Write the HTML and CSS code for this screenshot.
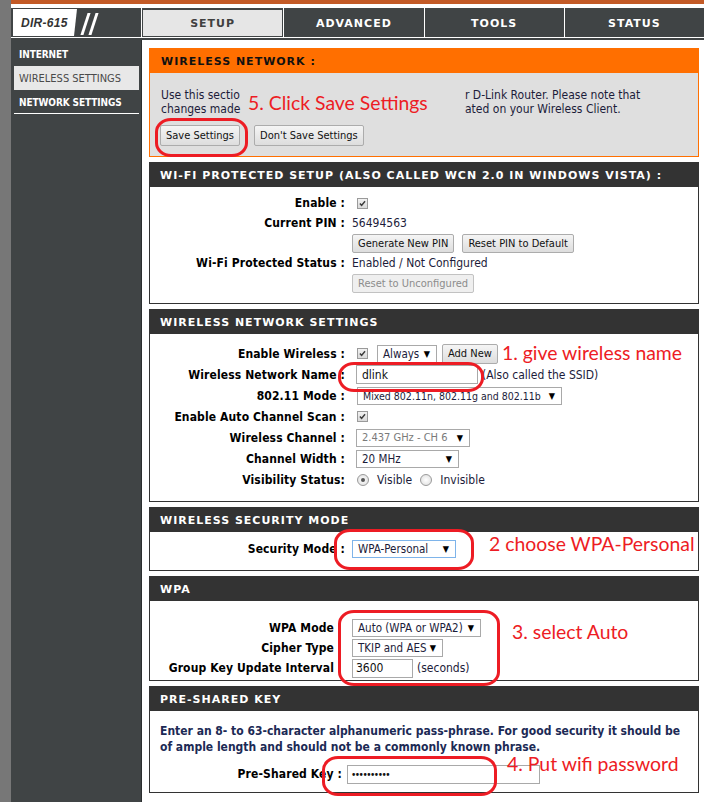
FILE: index.html
```html
<!DOCTYPE html>
<html lang="en">
<head>
    <meta charset="UTF-8">
    <title>DIR-615 - Wireless Settings</title>
    <link rel="stylesheet" href="styles.css">
</head>
<body>
<div class="page">
    <div class="brand-bar"></div>
    <div class="topnav">
        <div class="logo">
            <span class="model">DIR-615</span>
            <span class="slashes"><i></i><i></i></span>
        </div>
        <ul class="tabs">
            <li class="active"><span>SETUP</span></li>
            <li>ADVANCED</li>
            <li>TOOLS</li>
            <li>STATUS</li>
        </ul>
    </div>

    <div class="main">
        <ul class="sidenav">
            <li>INTERNET</li>
            <li class="current">WIRELESS SETTINGS</li>
            <li>NETWORK SETTINGS</li>
        </ul>

        <div class="content">
            <!-- page intro + save buttons -->
            <div class="box box-orange">
                <h2>WIRELESS NETWORK :</h2>
                <div class="box-body intro">
                    <div class="intro-text">
                        <p class="intro-left">Use this sectio<br>changes made</p>
                        <span class="note note-save">5. Click Save Settings</span>
                        <p>r D-Link Router. Please note that<br>ated on your Wireless Client.</p>
                    </div>
                    <div class="actions">
                        <button class="btn">Save Settings</button>
                        <button class="btn">Don't Save Settings</button>
                    </div>
                </div>
            </div>

            <div class="box">
                <h2>WI-FI PROTECTED SETUP (ALSO CALLED WCN 2.0 IN WINDOWS VISTA) :</h2>
                <div class="box-body form form-wps">
                    <span class="lbl">Enable :</span>
                    <span class="val"><span class="check"><svg viewBox="0 0 11 11"><path d="M2.3 5.6 4.4 7.8 8.6 2.8"/></svg></span></span>
                    <span class="lbl">Current PIN :</span>
                    <span class="val">56494563</span>
                    <span></span>
                    <span class="val btn-row">
                        <button class="btn">Generate New PIN</button>
                        <button class="btn">Reset PIN to Default</button>
                    </span>
                    <span class="lbl">Wi-Fi Protected Status :</span>
                    <span class="val">Enabled / Not Configured</span>
                    <span></span>
                    <span class="val"><button class="btn" disabled>Reset to Unconfigured</button></span>
                </div>
            </div>

            <div class="box">
                <h2>WIRELESS NETWORK SETTINGS</h2>
                <div class="box-body form form-wns">
                    <span class="lbl">Enable Wireless :</span>
                    <span class="val">
                        <span class="check"><svg viewBox="0 0 11 11"><path d="M2.3 5.6 4.4 7.8 8.6 2.8"/></svg></span>
                        <span class="select w-always">Always<b>&#9660;</b></span>
                        <button class="btn btn-add">Add New</button>
                    </span>
                    <span class="lbl">Wireless Network Name :</span>
                    <span class="val">
                        <input class="field w-ssid" type="text" value="dlink">
                        <span class="hint">(Also called the SSID)</span>
                    </span>
                    <span class="lbl">802.11 Mode :</span>
                    <span class="val"><span class="select w-mode">Mixed 802.11n, 802.11g and 802.11b<b>&#9660;</b></span></span>
                    <span class="lbl">Enable Auto Channel Scan :</span>
                    <span class="val"><span class="check"><svg viewBox="0 0 11 11"><path d="M2.3 5.6 4.4 7.8 8.6 2.8"/></svg></span></span>
                    <span class="lbl">Wireless Channel :</span>
                    <span class="val"><span class="select w-channel is-off">2.437 GHz - CH 6<b>&#9660;</b></span></span>
                    <span class="lbl">Channel Width :</span>
                    <span class="val"><span class="select w-width">20 MHz<b>&#9660;</b></span></span>
                    <span class="lbl">Visibility Status:</span>
                    <span class="val radios">
                        <span class="radio on"></span>Visible
                        <span class="radio"></span>Invisible
                    </span>
                </div>
            </div>

            <div class="box">
                <h2>WIRELESS SECURITY MODE</h2>
                <div class="box-body form form-wsm">
                    <span class="lbl">Security Mode :</span>
                    <span class="val"><span class="select w-security is-focus">WPA-Personal<b>&#9660;</b></span></span>
                </div>
            </div>

            <div class="box">
                <h2>WPA</h2>
                <div class="box-body form form-wpa">
                    <span class="lbl">WPA Mode</span>
                    <span class="val"><span class="select w-wpamode">Auto (WPA or WPA2)<b>&#9660;</b></span></span>
                    <span class="lbl">Cipher Type</span>
                    <span class="val"><span class="select w-cipher">TKIP and AES<b>&#9660;</b></span></span>
                    <span class="lbl">Group Key Update Interval</span>
                    <span class="val">
                        <input class="field w-interval" type="text" value="3600">
                        <span class="hint">(seconds)</span>
                    </span>
                </div>
            </div>

            <div class="box">
                <h2>PRE-SHARED KEY</h2>
                <div class="box-body psk">
                    <p>Enter an 8- to 63-character alphanumeric pass-phrase. For good security it should be<br>of ample length and should not be a commonly known phrase.</p>
                    <div class="form form-psk">
                        <span class="lbl">Pre-Shared Key :</span>
                        <span class="val"><input class="field w-psk" type="password" value="dlinkpass1"></span>
                    </div>
                </div>
            </div>

            <!-- red markup drawn over the form -->
            <span class="ring ring-save"></span>
            <span class="ring ring-ssid"></span>
            <span class="ring ring-security"></span>
            <span class="ring ring-wpa"></span>
            <span class="ring ring-psk"></span>
            <span class="note note-ssid">1. give wireless name</span>
            <span class="note note-security">2 choose WPA-Personal</span>
            <span class="note note-wpa">3. select Auto</span>
            <span class="note note-psk">4. Put wifi password</span>
        </div>
    </div>
</div>
</body>
</html>
```

FILE: styles.css
```css
body {
    margin: 0;
    background: #777;
    font-family: "DejaVu Sans Condensed", "Liberation Sans", sans-serif;
    font-size: 12px;
    color: #111;
}
.page {
    margin-left: 11px;
    min-height: 802px;
    background: #fff;
}
.brand-bar {
    height: 4px;
    background: #c35a26;
    border-bottom: 4px solid #fff;
}

/* top navigation */
.topnav {
    display: flex;
    height: 29px;
    background: #404445;
    border-bottom: 1px solid #fff;
}
.logo {
    width: 130px;
    display: flex;
    align-items: flex-start;
    padding: 1px 0 0 2px;
    box-sizing: border-box;
}
.model {
    width: 64px;
    height: 27px;
    line-height: 28px;
    padding-left: 8px;
    box-sizing: border-box;
    background: #fff;
    color: #333;
    font: italic bold 12px/28px "Liberation Sans", sans-serif;
    letter-spacing: 0.3px;
    clip-path: polygon(0 0, 100% 0, calc(100% - 3px) 100%, 0 100%);
}
.slashes {
    display: flex;
    gap: 5px;
    margin: 4px 0 0 7px;
}
.slashes i {
    width: 3px;
    height: 22px;
    background: #fff;
    transform: skewX(-18deg);
}
.tabs {
    display: flex;
    flex: 1;
    margin: 0;
    padding: 0;
    list-style: none;
}
.tabs li {
    flex: 1;
    padding-top: 2px;
    border-left: 1px solid #fff;
    text-align: center;
    color: #fff;
    font: bold 11px/27px "DejaVu Sans", Verdana, sans-serif;
    letter-spacing: 1px;
}
.tabs li.active {
    padding: 2px 1px 1px;
}
.tabs li.active span {
    display: block;
    padding-top: 2px;
    line-height: 24px;
    background: #e6e6e6;
    color: #404040;
}

.main {
    display: flex;
    border-top: 2px solid #404445;
}
.sidenav {
    width: 131px;
    min-height: 762px;
    margin: 0;
    padding: 2px 2px 0 3px;
    box-sizing: border-box;
    list-style: none;
    background: #404445;
    border-right: 1px solid #2b2e2f;
}
.sidenav li {
    height: 22px;
    padding: 2px 0 0 5px;
    line-height: 22px;
    color: #fff;
    font-weight: bold;
    font-size: 10px;
    letter-spacing: -0.1px;
    white-space: nowrap;
}
.sidenav li.current {
    background: #e8e8e8;
    color: #4a4a4a;
    font-weight: normal;
    font-size: 11px;
    letter-spacing: 0;
}
.sidenav li:last-child {
    height: 21px;
    border-bottom: 1px solid #fff;
}

.content {
    flex: 1;
    position: relative;
    padding: 8px 5px 0 7px;
}

/* section boxes */
.box {
    border: 1px solid #333;
    margin-bottom: 5px;
}
.box h2 {
    margin: 0;
    height: 22px;
    padding: 2px 0 0 10px;
    background: #333;
    color: #fff;
    font: bold 11px/22px "DejaVu Sans", Verdana, sans-serif;
    letter-spacing: 1px;
    white-space: nowrap;
}
.box-orange { border-color: #ff6f00; }
.box-orange h2 {
    background: #ff6f00;
    color: #111;
    padding-left: 11px;
}
.box-orange .box-body { background: #dfdfdf; }

.intro {
    padding: 15px 10px 10px 10px;
}
.intro-text {
    display: flex;
    align-items: flex-start;
    line-height: 14px;
    color: #1c1c3a;
}
.intro-text p {
    margin: 0;
    white-space: nowrap;
}
.intro-left {
    width: 78px;
    padding-left: 1px;
    box-sizing: border-box;
}
.note-save {
    width: 227px;
    padding-left: 10px;
    margin-top: 4px;
    box-sizing: border-box;
}
.actions {
    display: flex;
    gap: 14px;
    margin-top: 9px;
}
.actions .btn { height: 21px; padding: 0 5px; }

.btn {
    height: 19px;
    padding: 0 5px;
    border: 1px solid #acacac;
    border-radius: 2px;
    background: linear-gradient(#f5f5f5, #dddddd);
    color: #111;
    font: 11px "DejaVu Sans Condensed", "Liberation Sans", sans-serif;
    white-space: nowrap;
}
.btn:disabled {
    color: #8c8c8c;
    border-color: #c2c2c2;
    background: #efefef;
}

/* label / value rows */
.form {
    display: grid;
    grid-template-columns: 195px auto;
    column-gap: 7px;
    grid-auto-rows: 20px;
    align-items: center;
}
.lbl {
    text-align: right;
    font-weight: bold;
    letter-spacing: 0.12px;
    color: #000;
    white-space: nowrap;
}
.val {
    display: flex;
    align-items: center;
    white-space: nowrap;
    color: #1c1c3a;
}
.btn-row { gap: 8px; }
.form-wps { padding: 6px 0 10px; }
.form-wns { padding: 9px 0 11px; grid-auto-rows: 21px; }
.form-wsm { padding: 7px 0 11px; }
.form-wpa { padding: 17px 0 2px; }
.form-wpa .lbl { padding-right: 11px; }

.check {
    display: inline-block;
    width: 11px;
    height: 11px;
    margin-left: 5px;
    border: 1px solid #9a9a9a;
    background: linear-gradient(#f2f2f2, #d9d9d9);
    box-sizing: border-box;
}
.check svg {
    display: block;
    width: 9px;
    height: 9px;
}
.check path {
    fill: none;
    stroke: #3c3c3c;
    stroke-width: 1.8;
}
.select {
    display: inline-flex;
    align-items: center;
    justify-content: space-between;
    height: 18px;
    padding: 0 6px 0 5px;
    border: 1px solid #a9a9a9;
    box-sizing: border-box;
    background: #fff;
    color: #1c1c3a;
    font-size: 11.5px;
}
.select b {
    font-size: 9px;
    color: #000;
    font-weight: normal;
}
.select.is-off { color: #7a7a7a; }
.select.is-focus { border-color: #7eb4ea; }
.w-always { width: 60px; margin-left: 9px; }
.btn-add { margin-left: 5px; height: 20px; padding: 0 5px; }
.w-mode { width: 205px; margin-left: 5px; font-size: 10.5px; }
.w-channel { width: 114px; margin-left: 4px; font-size: 11px; }
.w-width { width: 103px; margin-left: 4px; }
.w-security { width: 104px; }
.w-wpamode { width: 129px; }
.w-cipher { width: 91px; }

.field {
    height: 19px;
    padding: 0 5px;
    border: 1px solid #a9a9a9;
    box-sizing: border-box;
    font: 12px "DejaVu Sans Condensed", "Liberation Sans", sans-serif;
    color: #111;
}
.w-ssid { width: 122px; margin-left: 4px; }
.w-interval { width: 61px; padding-left: 3px; }
.w-psk { width: 193px; padding-left: 3px; letter-spacing: -1.5px; font-size: 10px; }
.hint { margin-left: 4px; }

.radio {
    display: inline-block;
    position: relative;
    width: 12px;
    height: 12px;
    margin: 0 8px 0 5px;
    border: 1px solid #9a9a9a;
    border-radius: 50%;
    box-sizing: border-box;
    background: radial-gradient(#ffffff, #dcdcdc);
}
.radios .radio:last-of-type { margin-left: 8px; }
.radio.on::after {
    content: "";
    position: absolute;
    left: 3px;
    top: 3px;
    width: 4px;
    height: 4px;
    border-radius: 50%;
    background: #555;
}

.psk {
    padding: 12px 10px 8px 10px;
}
.psk p {
    margin: 0;
    line-height: 16px;
    font-weight: bold;
    color: #1c2a55;
    white-space: nowrap;
}
.form-psk {
    grid-template-columns: 182px auto;
    column-gap: 5px;
    margin-top: 9px;
}

/* red hand-drawn markup */
.note {
    font: 19.4px/22px Lato, "Open Sans", sans-serif;
    color: #ed1c24;
    white-space: nowrap;
}
.ring {
    position: absolute;
    border: 3px solid #ed1c24;
    border-radius: 16px / 14px;
    box-sizing: border-box;
}
.ring-save { left: 13px; top: 78px; width: 93px; height: 39px; }
.ring-ssid { left: 196px; top: 322px; width: 146px; height: 30px; }
.ring-security { left: 192px; top: 489px; width: 140px; height: 41px; }
.ring-wpa { left: 196px; top: 570px; width: 162px; height: 76px; }
.ring-psk { left: 180px; top: 716px; width: 175px; height: 40px; }
.note-ssid, .note-security, .note-wpa, .note-psk { position: absolute; }
.note-ssid { left: 360px; top: 302px; }
.note-security { left: 347px; top: 493px; }
.note-wpa { left: 370px; top: 581px; }
.note-psk { left: 365px; top: 713px; }
```
